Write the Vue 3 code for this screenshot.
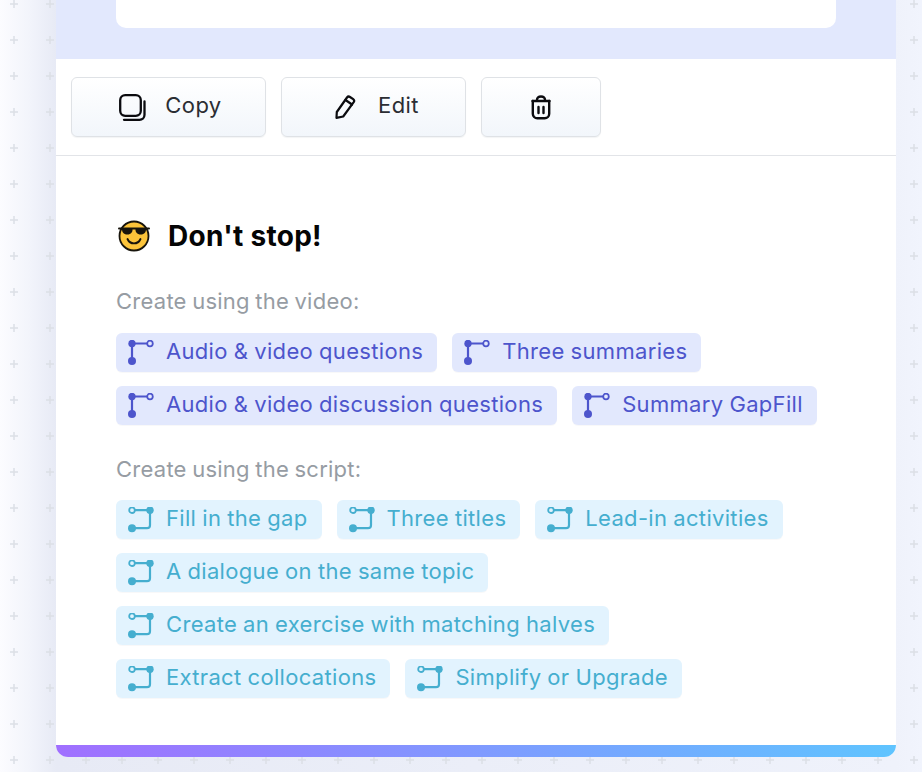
<template>
  <div class="page">
    <svg class="dots" width="922" height="772" aria-hidden="true">
      <defs>
        <pattern id="plus" width="36" height="36" patternUnits="userSpaceOnUse" y="-14">
          <path d="M10 18h8M14 14v8" stroke="#dcdfe6" stroke-width="1.500" />
        </pattern>
      </defs>
      <rect width="922" height="772" fill="url(#plus)" />
    </svg>

    <div class="card">
      <div class="preview">
        <div class="preview-panel"></div>
      </div>

      <div class="toolbar">
        <button class="tool-btn copy" type="button">
          <svg width="27" height="27" viewBox="0 0 27 27" fill="none" stroke="#0b0b0f" stroke-width="2.300" stroke-linecap="round" stroke-linejoin="round">
            <rect x="1.200" y="1.200" width="20.600" height="20.600" rx="5" />
            <path d="M5 25.800h15.500a5 5 0 0 0 5-5V7.500" />
          </svg>
          <span>Copy</span>
        </button>
        <button class="tool-btn edit" type="button">
          <svg width="21" height="24" viewBox="0 0 21 24" fill="none" stroke="#0b0b0f" stroke-width="2.200" stroke-linecap="round" stroke-linejoin="round">
            <path d="M1.500 22.800l0.300-5.800L12 2.500a2.200 2.200 0 0 1 3-0.500l3.200 2.200a2.200 2.200 0 0 1 0.500 3L8.200 21.500l-6.700 1.300z" />
            <path d="M10.500 5l6.500 4.500" />
          </svg>
          <span>Edit</span>
        </button>
        <button class="tool-btn trash" type="button" aria-label="Delete">
          <svg width="20" height="25" viewBox="0 0 20 25" fill="none" stroke="#0b0b0f" stroke-width="2.400" stroke-linecap="round" stroke-linejoin="round">
            <path d="M1.500 6h17" />
            <path d="M6 5c0-2.200 1.500-3.500 4-3.500s4 1.300 4 3.500" />
            <path d="M1.800 6v12.800a4.500 4.500 0 0 0 4.500 4.500h7.400a4.500 4.500 0 0 0 4.500-4.500V6" />
            <path d="M7.500 12v6M12.500 12v6" />
          </svg>
        </button>
      </div>

      <div class="content">
        <div class="heading">
          <svg class="emoji" width="34" height="34" viewBox="0 0 34 34">
            <circle cx="17" cy="17" r="14.500" fill="#fcc43a" stroke="#17140c" stroke-width="1.800" />
            <path d="M2 9.500h30" stroke="#17140c" stroke-width="2" stroke-linecap="round" />
            <path d="M5 9.500h10.500c0.300 3.600-1.400 6-5.200 6s-5.500-2.400-5.300-6z" fill="#17140c" />
            <path d="M18.500 9.500H29c0.200 3.600-1.500 6-5.300 6s-5.500-2.400-5.200-6z" fill="#17140c" />
            <path d="M10.500 20c1.300 3 3.600 4.400 6.500 4.400s5.200-1.400 6.500-4.400" fill="none" stroke="#17140c" stroke-width="1.900" stroke-linecap="round" />
          </svg>
          <h2>Don't stop!</h2>
        </div>

        <p class="label">Create using the video:</p>
        <div class="chips">
          <span v-for="item in videoItems" :key="item" class="chip video">
            <svg width="26" height="26" viewBox="0 0 26 26" fill="none" stroke="currentColor" stroke-width="2.200">
              <path d="M4 4v17M4 3.500h16" />
              <circle cx="4" cy="3.500" r="3.700" fill="currentColor" stroke="none" />
              <circle cx="4" cy="21" r="4" fill="currentColor" stroke="none" />
              <circle cx="22" cy="3.500" r="2.800" fill="#e2e8fd" stroke-width="1.800" />
            </svg>
            <span class="chip-text">{{ item }}</span>
          </span>
        </div>

        <p class="label">Create using the script:</p>
        <div class="chips script-chips">
          <span v-for="item in scriptItems" :key="item" class="chip script">
            <svg width="26" height="26" viewBox="0 0 26 26" fill="none" stroke="currentColor" stroke-width="2.200">
              <path d="M6 3.200h16v15a3 3 0 0 1-3 3H6" />
              <circle cx="4" cy="3.200" r="2.800" fill="#e2f3fe" stroke-width="1.800" />
              <circle cx="22" cy="3.200" r="3.700" fill="currentColor" stroke="none" />
              <circle cx="4" cy="21.200" r="4" fill="currentColor" stroke="none" />
            </svg>
            <span class="chip-text">{{ item }}</span>
          </span>
        </div>
      </div>

      <div class="accent"></div>
    </div>
  </div>
</template>

<script setup>
const videoItems = [
  "Audio & video questions",
  "Three summaries",
  "Audio & video discussion questions",
  "Summary GapFill",
];

const scriptItems = [
  "Fill in the gap",
  "Three titles",
  "Lead-in activities",
  "A dialogue on the same topic",
  "Create an exercise with matching halves",
  "Extract collocations",
  "Simplify or Upgrade",
];
</script>

<style>
html,
body {
  margin: 0;
  background: #f1f4fd;
}
</style>

<style scoped>
.page {
  position: relative;
  box-sizing: border-box;
  width: 922px;
  height: 772px;
  overflow: hidden;
  padding: 0 26px 15px 56px;
  font-family: Inter, "Liberation Sans", sans-serif;
  background: linear-gradient(90deg, #fcfcff 0, #f2f4fb 30px, #e7eaf5 56px, #eff2fb 896px, #f1f4fd 922px);
}

.dots {
  position: absolute;
  top: 0;
  left: 0;
}

.card {
  position: relative;
  height: 100%;
  display: flex;
  flex-direction: column;
  background: #ffffff;
  border-radius: 0 0 12px 12px;
  overflow: hidden;
}

.preview {
  flex: none;
  padding: 0 60px 31px;
  background: #e2e8fd;
}

.preview-panel {
  height: 28px;
  background: #ffffff;
  border-radius: 0 0 10px 10px;
}

.toolbar {
  flex: none;
  display: flex;
  gap: 15px;
  padding: 18px 15px;
  border-bottom: 1px solid #e2e4e8;
}

.tool-btn {
  height: 60px;
  display: flex;
  align-items: center;
  justify-content: center;
  border: 1px solid #dfe2e6;
  border-radius: 6px;
  background: linear-gradient(#ffffff, #f2f6fb);
  box-shadow: 0 1px 1px rgba(20, 30, 60, 0.05);
  color: #2b2d33;
  font-family: inherit;
  font-size: 22px;
  font-weight: 400;
  letter-spacing: 0.4px;
  padding: 0;
}

.tool-btn span {
  margin-top: -4px;
}

.copy {
  width: 195px;
  gap: 19px;
  padding-left: 4px;
}

.edit {
  width: 185px;
  gap: 22px;
  padding-left: 7px;
}

.trash {
  width: 120px;
}

.content {
  flex: 1;
  padding: 62px 60px 0 61px;
}

.heading {
  display: flex;
  align-items: center;
  gap: 17px;
  height: 36px;
}

.heading h2 {
  margin: 0;
  color: #050505;
  font-size: 28px;
  font-weight: 700;
  letter-spacing: 0.3px;
}

.label {
  margin: 31px 0 0 -1px;
  color: #969ca3;
  font-size: 22px;
  letter-spacing: 0.25px;
  word-spacing: -1px;
  line-height: 32px;
}

.chips {
  display: flex;
  flex-wrap: wrap;
  gap: 14px 15px;
  margin: 16px 0 0 -1px;
}

.chips + .label {
  margin-top: 28px;
}

.script-chips {
  margin-top: 15px;
}

.chip {
  height: 39px;
  display: flex;
  align-items: center;
  gap: 12px;
  padding: 0 14px 0 12px;
  border-radius: 6px;
  box-shadow: 0 1px 1px rgba(20, 30, 60, 0.03);
  font-size: 22px;
  letter-spacing: 0.32px;
  word-spacing: -0.5px;
}

.chip-text {
  margin-top: -3px;
}

.chip.video {
  background: #e2e8fd;
  color: #4d55cc;
}

.chip.script {
  background: #e2f3fe;
  color: #45aecf;
}

.accent {
  flex: none;
  height: 12px;
  background: linear-gradient(90deg, #a06fff, #5fc4ff);
}
</style>
